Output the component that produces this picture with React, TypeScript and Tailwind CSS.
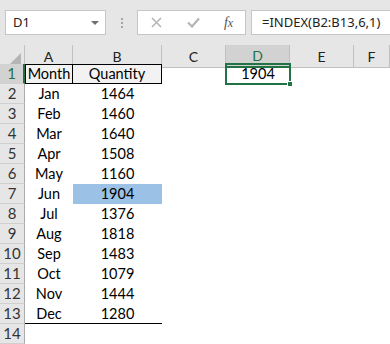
import React from 'react';

const ROWS: [string, string][] = [
  ['Jan', '1464'], ['Feb', '1460'], ['Mar', '1640'], ['Apr', '1508'],
  ['May', '1160'], ['Jun', '1904'], ['Jul', '1376'], ['Aug', '1818'],
  ['Sep', '1483'], ['Oct', '1079'], ['Nov', '1444'], ['Dec', '1280'],
];

const COLS = ['A', 'B', 'C', 'D', 'E', 'F'];
const grid = 'grid grid-cols-[25px_48px_89px_64px_64px_64px_1fr]';
const cellFont = { fontFamily: 'Lato, "Noto Sans", sans-serif' };
const uiFont = { fontFamily: '"Noto Sans", "Open Sans", sans-serif' };

function RowHead({ n, active }: { n: number; active?: boolean }) {
  return (
    <div
      className={
        'h-5 flex items-center justify-center text-[15px] border-b border-[#d0d0d0] ' +
        (active
          ? 'bg-[#d2d2d2] text-[#217346] border-r-2 border-r-[#217346]'
          : 'bg-[#e6e6e6] text-[#333] border-r border-r-[#ababab]')
      }
      style={cellFont}
    >
      {n}
    </div>
  );
}

function Cell({ children, className = '' }: { children?: React.ReactNode; className?: string }) {
  return (
    <div className={'h-5 flex items-center justify-center text-[14.5px] text-black ' + className} style={cellFont}>
      {children}
    </div>
  );
}

export default function App() {
  return (
    <div className="w-[390px] h-[344px] overflow-hidden bg-white select-none">
      {/* formula bar */}
      <div className="h-[45px] bg-[#e6e6e6] flex items-start pt-[10px] pl-[5px]">
        <div className="w-[101px] h-[25px] bg-white border border-[#c6c6c6] flex items-center justify-between pl-[7px] pr-[6px]">
          <span className="text-[13px] text-[#222]" style={uiFont}>D1</span>
          <span className="w-0 h-0 border-l-[4px] border-r-[4px] border-t-[4px] border-l-transparent border-r-transparent border-t-[#6e6e6e]" />
        </div>
        <div className="w-[31px] h-[25px] flex flex-col items-center justify-center gap-[2px]">
          <span className="w-[2px] h-[2px] bg-[#a6a6a6]" />
          <span className="w-[2px] h-[2px] bg-[#a6a6a6]" />
          <span className="w-[2px] h-[2px] bg-[#a6a6a6]" />
        </div>
        <div className="w-[109px] h-[25px] bg-white border border-[#c6c6c6] flex items-center">
          <div className="w-[37px] flex justify-center">
            <svg width="11" height="11" viewBox="0 0 11 11">
              <path d="M1 1 L10 10 M10 1 L1 10" stroke="#b4b4b4" strokeWidth="1.5" fill="none" />
            </svg>
          </div>
          <div className="w-[37px] flex justify-center">
            <svg width="13" height="11" viewBox="0 0 13 11">
              <path d="M1 5.5 L5 9.5 L12 1.5" stroke="#b4b4b4" strokeWidth="2.2" fill="none" />
            </svg>
          </div>
          <div className="flex-1 flex justify-center">
            <span className="text-[14px] italic text-[#555] leading-none" style={{ fontFamily: '"Liberation Serif", serif' }}>
              f<span className="text-[12px]">x</span>
            </span>
          </div>
        </div>
        <div className="ml-[5px] flex-1 h-[25px] bg-white border border-[#c6c6c6] border-r-0 flex items-center pl-[10px]">
          <span className="text-[13px] text-[#222]" style={uiFont}>=INDEX(B2:B13,6,1)</span>
        </div>
      </div>

      {/* column headers */}
      <div className={grid + ' h-[19px]'}>
        <div className="bg-[#e6e6e6] border-r border-b border-[#c0c0c0] flex items-end justify-end pr-[3px] pb-[2px]">
          <svg width="12" height="12" viewBox="0 0 12 12">
            <path d="M12 0 L12 12 L0 12 Z" fill="#b4b4b4" />
          </svg>
        </div>
        {COLS.map(c => (
          <div
            key={c}
            className={
              'flex items-center justify-center text-[14px] border-r border-r-[#c0c0c0] ' +
              (c === 'D'
                ? 'bg-[#d2d2d2] text-[#217346] border-b-2 border-b-[#217346]'
                : 'bg-[#e6e6e6] text-[#222] border-b border-b-[#c0c0c0]')
            }
            style={cellFont}
          >
            {c}
          </div>
        ))}
      </div>

      {/* row 1 */}
      <div className={grid}>
        <RowHead n={1} active />
        <Cell className="bg-[#f2f2f2] border border-black">Month</Cell>
        <Cell className="bg-[#f2f2f2] border-t border-r border-b border-black">Quantity</Cell>
        <Cell />
        <div className="relative">
          <Cell>1904</Cell>
          <div className="absolute -top-[1px] -left-[1px] -right-[1px] -bottom-[1px] border-2 border-[#217346]" />
          <div className="absolute -right-[3px] -bottom-[3px] w-[6px] h-[6px] bg-[#217346] border border-white" />
        </div>
        <Cell />
        <Cell />
      </div>

      {ROWS.map(([m, q], i) => {
        const last = i === ROWS.length - 1;
        return (
          <div key={m} className={grid}>
            <RowHead n={i + 2} />
            <Cell className={last ? 'border-b border-black' : ''}>{m}</Cell>
            <Cell className={(m === 'Jun' ? 'bg-[#9bc2e6] ' : '') + (last ? 'border-b border-black' : '')}>{q}</Cell>
            <Cell />
            <Cell />
            <Cell />
            <Cell />
          </div>
        );
      })}

      <div className={grid}>
        <RowHead n={14} />
        <Cell />
      </div>
    </div>
  );
}
